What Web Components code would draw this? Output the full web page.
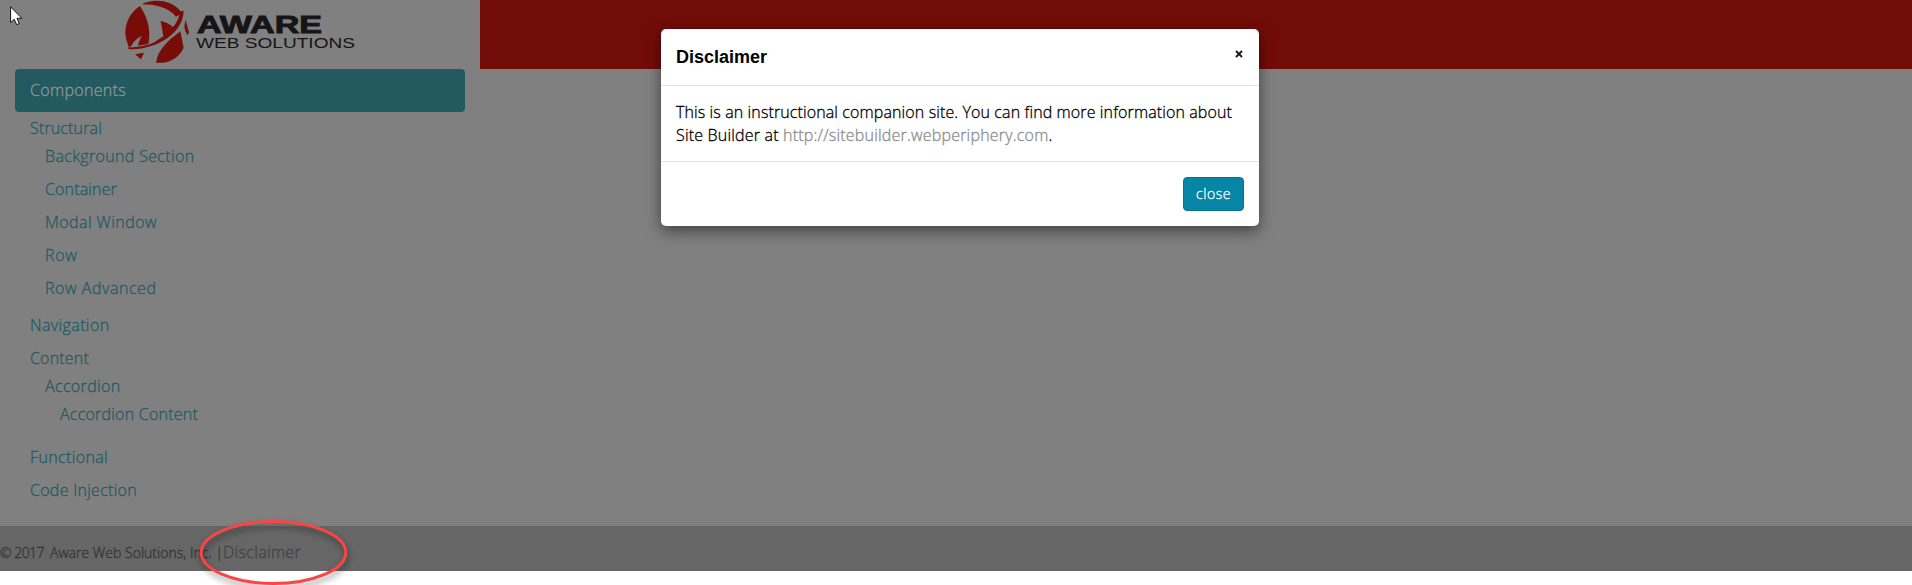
<!DOCTYPE html>
<html lang="en">
<head>
<meta charset="utf-8">
<title>Aware Web Solutions</title>
<style>
html,body{margin:0;height:100%;background:#fff;overflow:hidden}
body{font:300 16px/23px "Open Sans","Liberation Sans",sans-serif;-webkit-text-stroke:.3px currentColor}
</style>
</head>
<body>
<aws-page></aws-page>
<script>
const define = (name, html, ready) => customElements.define(name, class extends HTMLElement {
  connectedCallback() {
    if (this.shadowRoot) return;
    const t = document.createElement('template');
    t.innerHTML = html;
    this.attachShadow({mode: 'open'}).append(t.content.cloneNode(true));
    if (ready) ready.call(this);
  }
});

/* A run of text tracked out or in to a given width. */
define('fit-text', `<style>:host{display:inline-block;white-space:pre}</style><slot></slot>`, function () {
  const w = +this.getAttribute('w');
  const n = this.textContent.length;
  const now = this.getBoundingClientRect().width;
  if (now) this.style.letterSpacing = ((w - now) / n).toFixed(3) + 'px';
});

define('aws-logo', `<style>:host{display:block;height:69px;-webkit-text-stroke:0}svg{display:block}</style>
<svg width="480" height="69" viewBox="0 0 480 69">
 <g transform="translate(120 0) scale(.3333)" fill="#780c08">
  <path d="M60 18C27 38 10 80 18 115L26 141L34 138C40 124 52 114 66 107C60 116 56 126 54 137L85 132C92 98 88 60 60 18Z"/>
  <path d="M65 13C98-5 154-2 182 34L191 32C190 82 147 119 102 135C75 145 48 149 25 147L25 142C57 142 82 137 103 127L130 109L122 62C137 66 149 72 159 81C169 70 175 58 178 44L168 50C145 22 106 13 65 13Z"/>
  <path d="M197 61L207 97L203 106C199 98 188 88 197 61Z"/>
  <path d="M181 94L191 143C176 176 143 192 108 188C114 150 139 126 181 94Z"/>
  <path d="M45 163L72 158L63 178Z"/>
 </g>
 <g fill="#151416" font-family="Liberation Sans,sans-serif">
  <text x="197" y="33" font-size="24" font-weight="700" stroke="#151416" stroke-width=".9" textLength="125" lengthAdjust="spacingAndGlyphs">AWARE</text>
  <text x="196" y="48" font-size="14" font-weight="400" textLength="159" lengthAdjust="spacingAndGlyphs">WEB SOLUTIONS</text>
 </g>
</svg>`);

define('nav-title', `<style>:host{display:flex;box-sizing:border-box;height:43px;padding:10px 15px;background:#235a60;border-radius:4px;color:#929698}</style><slot></slot>`);

define('nav-item', `<style>:host{display:block;height:23px;margin-top:5px;color:#215b64}
:host([gap="10"]){margin-top:10px}:host([gap="14"]){margin-top:14px}:host([gap="20"]){margin-top:20px}
:host([level="1"]){padding-left:15px}:host([level="2"]){padding-left:30px}</style><slot></slot>`);

define('side-nav', `<style>:host{display:block;width:480px}nav{padding:0 15px}.list{padding:0 15px}</style>
<aws-logo></aws-logo>
<nav><nav-title><fit-text w="96">Components</fit-text></nav-title>
<div class="list">
<nav-item><fit-text w="72">Structural</fit-text></nav-item>
<nav-item level="1"><fit-text w="149.5">Background Section</fit-text></nav-item>
<nav-item level="1" gap="10"><fit-text w="72">Container</fit-text></nav-item>
<nav-item level="1" gap="10"><fit-text w="112">Modal Window</fit-text></nav-item>
<nav-item level="1" gap="10"><fit-text w="32.5">Row</fit-text></nav-item>
<nav-item level="1" gap="10"><fit-text w="111.5">Row Advanced</fit-text></nav-item>
<nav-item gap="14"><fit-text w="79.5">Navigation</fit-text></nav-item>
<nav-item gap="10"><fit-text w="59">Content</fit-text></nav-item>
<nav-item level="1"><fit-text w="75.5">Accordion</fit-text></nav-item>
<nav-item level="2"><fit-text w="138">Accordion Content</fit-text></nav-item>
<nav-item gap="20"><fit-text w="78">Functional</fit-text></nav-item>
<nav-item gap="10"><fit-text w="107">Code Injection</fit-text></nav-item>
</div></nav>`);

define('page-footer', `<style>:host{display:flex;align-items:baseline;box-sizing:border-box;height:45px;padding-top:15px;background:#666;color:#333}
.c{font-size:14px}.y{margin-right:6px}.d{color:#424242}</style>
<fit-text class="c y" w="44">© 2017</fit-text><fit-text class="c" w="173">Aware Web Solutions, Inc. |</fit-text><fit-text class="d" w="78">Disclaimer</fit-text>`);

define('modal-dialog', `<style>
:host{display:block;box-sizing:border-box;width:598px;height:197px;background:#fff;border-radius:5px;box-shadow:0 5px 15px rgba(0,0,0,.5);color:#000}
header{display:flex;justify-content:space-between;box-sizing:border-box;height:57px;padding:15px 15px 0;border-bottom:1px solid #e3e3e3;font:bold 18px/26px "Liberation Sans",sans-serif;color:#000;-webkit-text-stroke:0}
header svg{margin:6px 1px 0 0;width:8px;height:8px}
section{box-sizing:border-box;height:76px;padding:15px;border-bottom:1px solid #e3e3e3}
.line{display:flex;height:23px}.link{color:#8c8c8c}
footer{display:flex;justify-content:flex-end;padding:15px}
button{box-sizing:border-box;width:61px;height:34px;padding:0;background:#0785a5;border:1px solid #067490;border-radius:4px;color:#fff;font:300 14px/20px "Open Sans",sans-serif}
</style>
<header><fit-text w="91">Disclaimer</fit-text><svg viewBox="0 0 8 8"><path d="M1 1L7 7M7 1L1 7" stroke="#1a1a1a" stroke-width="1.9"/></svg></header>
<section><div class="line"><fit-text w="556">This is an instructional companion site. You can find more information about</fit-text></div>
<div class="line"><fit-text w="107">Site Builder at </fit-text><fit-text class="link" w="265.5">http://sitebuilder.webperiphery.com</fit-text><span>.</span></div></section>
<footer><button><fit-text w="35">close</fit-text></button></footer>`);

define('mouse-cursor', `<style>:host{position:absolute;left:10px;top:6px}svg{display:block}</style>
<svg width="13" height="20" viewBox="0 0 13 20"><path d="M.6.8V16.6L4.2 13.3L6.7 18.7L9.3 17.5L7 12.3H11.8Z" fill="#fff" stroke="#101018" stroke-width="1"/></svg>`);

define('callout-ring', `<style>:host{position:absolute;left:190px;top:510px}svg{display:block;overflow:visible;filter:drop-shadow(1px 4px 3px rgba(0,0,0,.45))}</style>
<svg width="170" height="75"><ellipse cx="83.5" cy="42.5" rx="72.3" ry="31" fill="none" stroke="#fa4545" stroke-width="3"/></svg>`);

define('aws-page', `<style>
:host{display:block;position:relative;width:1912px;height:585px;overflow:hidden}
main{display:flex;height:526px;background:#808080}
.banner{flex:1;height:69px;background:#720c08}
modal-dialog{position:absolute;left:661px;top:29px}
</style>
<main><side-nav></side-nav><div class="banner"></div></main>
<page-footer></page-footer>
<modal-dialog></modal-dialog><callout-ring></callout-ring><mouse-cursor></mouse-cursor>`);
</script>
</body>
</html>
